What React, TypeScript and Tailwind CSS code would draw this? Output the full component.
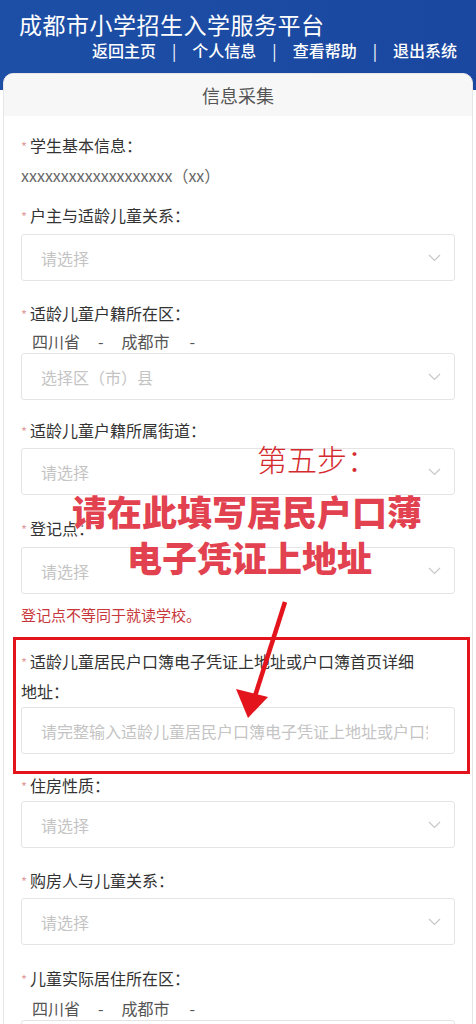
import type { ReactNode } from 'react'

const font = { fontFamily: '"Noto Sans CJK SC", "Noto Sans", sans-serif' }

function Label({ children, className = '' }: { children: ReactNode; className?: string }) {
  return (
    <div className={`h-[22px] text-[16px] leading-[22px] text-[#333] ${className}`}>
      <span className="mr-[3px] text-[13px] text-[#e0a0a0]">*</span>
      {children}
    </div>
  )
}

function Chevron() {
  return (
    <svg width="13" height="8" viewBox="0 0 13 8" fill="none">
      <path d="M1 1l5.5 5.5L12 1" stroke="#c8c8c8" strokeWidth="1.2" />
    </svg>
  )
}

function Select({ placeholder = '请选择', className = '' }: { placeholder?: string; className?: string }) {
  return (
    <div
      className={`flex h-[47px] items-center justify-between rounded-[3px] border border-[#e4e4e4] bg-white pl-[19px] pr-[13px] ${className}`}
    >
      <span className="text-[16px] text-[#c4c4c4]">{placeholder}</span>
      <Chevron />
    </div>
  )
}

function Region({ className = '' }: { className?: string }) {
  return (
    <div className={`h-[22px] whitespace-nowrap pl-[11px] text-[16px] leading-[22px] text-[#555] ${className}`}>
      四川省<span className="mx-[18px]">-</span>成都市<span className="ml-[20px]">-</span>
    </div>
  )
}

export default function App() {
  return (
    <div className="relative h-[1024px] w-[476px] overflow-hidden bg-white" style={font}>
      {/* header */}
      <div className="h-[90px] bg-gradient-to-r from-[#1d4fa6] to-[#1a47a0] px-[19px] pt-[11px] text-white">
        <div className="text-[23px] leading-[26px] tracking-[0.5px]">成都市小学招生入学服务平台</div>
        <div className="mt-[3px] flex justify-end gap-[16px] text-[16px] font-medium leading-[20px]">
          <span>返回主页</span>
          <span className="font-normal">|</span>
          <span>个人信息</span>
          <span className="font-normal">|</span>
          <span>查看帮助</span>
          <span className="font-normal">|</span>
          <span>退出系统</span>
        </div>
      </div>

      {/* card */}
      <div className="mx-[3px] -mt-[17px] rounded-t-[10px] border border-[#e6e6e6] bg-white">
        <div className="flex h-[42px] items-center justify-center rounded-t-[10px] bg-[#f7f7f7] text-[18px] text-[#555]">
          信息采集
        </div>

        <div className="px-[17px] pb-[20px]">
          <Label className="mt-[18px]">学生基本信息：</Label>
          <div className="mt-[8px] h-[22px] text-[16px] leading-[22px] text-[#666]">xxxxxxxxxxxxxxxxxxx（xx）</div>

          <Label className="mt-[18px]">户主与适龄儿童关系：</Label>
          <Select className="mt-[8px]" />

          <Label className="mt-[21px]">适龄儿童户籍所在区：</Label>
          <Region className="mt-[6px]" />
          <Select className="mt-[1px]" placeholder="选择区（市）县" />

          <Label className="mt-[19px]">适龄儿童户籍所属街道：</Label>
          <Select className="mt-[7px]" />

          <Label className="mt-[22px]">登记点：</Label>
          <Select className="mt-[8px]" />

          <div className="mt-[11px] h-[20px] text-[15px] leading-[20px] text-[#c7373b]">登记点不等同于就读学校。</div>

          <div className="mt-[22px] text-[16px] leading-[28px] text-[#333]">
            <span className="mr-[3px] text-[13px] text-[#e0a0a0]">*</span>
            适龄儿童居民户口簿电子凭证上地址或户口簿首页详细<span className="whitespace-nowrap">地址：</span>
          </div>
          <div className="mt-[2px] flex h-[47px] items-center rounded-[3px] border border-[#e4e4e4] pl-[19px] pr-[26px]">
            <span className="overflow-hidden whitespace-nowrap text-[16px] text-[#c4c4c4]">
              请完整输入适龄儿童居民户口簿电子凭证上地址或户口簿首页详细地址
            </span>
          </div>

          <Label className="mt-[20px]">住房性质：</Label>
          <Select className="mt-[5px]" />

          <Label className="mt-[21px]">购房人与儿童关系：</Label>
          <Select className="mt-[7px]" />

          <Label className="mt-[22px]">儿童实际居住所在区：</Label>
          <Region className="mt-[8px]" />
          <Select className="mt-[1px]" placeholder="选择区（市）县" />
        </div>
      </div>

      {/* annotation overlay */}
      <div className="pointer-events-none absolute left-[13px] top-[637px] h-[137px] w-[457px] border-[3px] border-[#e3141c]" />
      <div className="pointer-events-none absolute left-[257px] top-[436px] whitespace-nowrap text-[30px] font-light leading-[44px] text-[#d42a2e]">
        第五步：
      </div>
      <div
        className="pointer-events-none absolute left-[72px] top-[488px] whitespace-nowrap text-[35px] font-black leading-[46px] text-[#e2424f]"
        style={{ textShadow: '0 0 3px #fff, 0 0 2px #fff' }}
      >
        请在此填写居民户口薄
      </div>
      <div
        className="pointer-events-none absolute left-[127px] top-[534px] whitespace-nowrap text-[35px] font-black leading-[46px] text-[#e2424f]"
        style={{ textShadow: '0 0 3px #fff, 0 0 2px #fff' }}
      >
        电子凭证上地址
      </div>
      <svg className="pointer-events-none absolute left-[228px] top-[596px]" width="70" height="128" viewBox="0 0 70 128">
        <line x1="57" y1="6" x2="27" y2="100" stroke="#e3141c" strokeWidth="4.5" />
        <polygon points="20,122 8,93 40,101" fill="#e3141c" />
      </svg>
    </div>
  )
}
